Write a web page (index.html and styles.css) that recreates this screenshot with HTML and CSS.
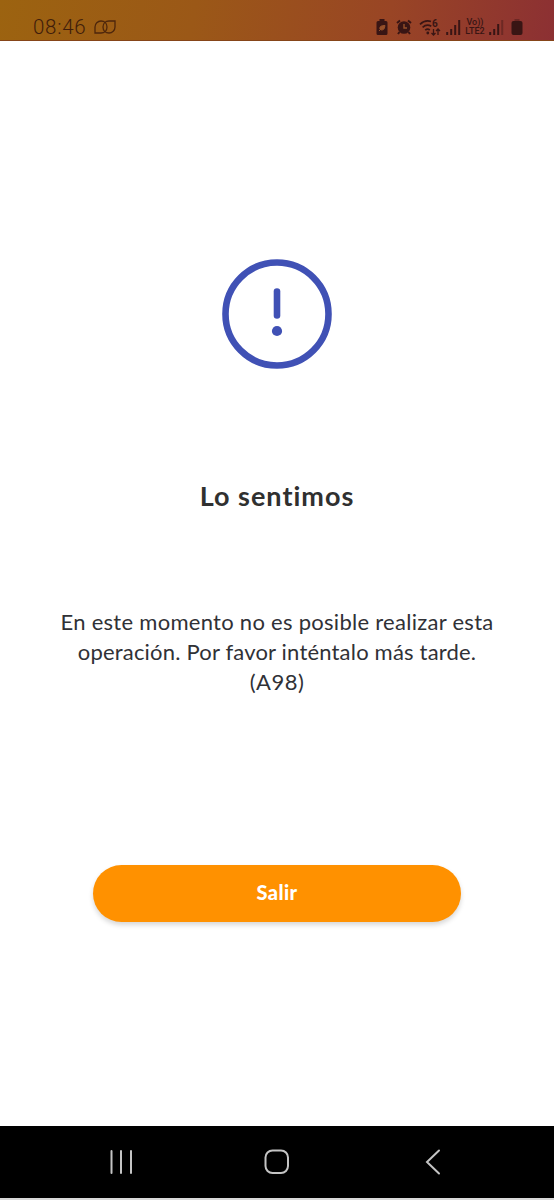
FILE: index.html
```
<!DOCTYPE html>
<html lang="es">
<head>
  <meta charset="UTF-8" />
  <meta name="viewport" content="width=device-width, initial-scale=1.0" />
  <title>Lo sentimos</title>
  <link rel="stylesheet" href="styles.css">
</head>
<body>
  <header class="status-bar">
    <span class="time">08:46</span>
    <svg class="rings" width="22" height="14" viewBox="0 0 22 14">
      <path d="M1 13V7a6 6 0 0 1 6-6c3.500 0 6 2.500 6 6s-2.500 6-6 6z" />
      <path d="M21 1v6a6 6 0 0 1-6 6c-3.500 0-6-2.500-6-6s2.500-6 6-6z" />
    </svg>

    <div class="status-icons">
      <svg class="saver" width="12" height="16" viewBox="0 0 12 16">
        <path class="fill" d="M3.500 0h5v2h1.500q1.500 0 1.500 1.500v11q0 1.500-1.500 1.500h-8Q.5 16 .5 14.500v-11Q.5 2 2 2h1.500z" />
        <path class="cut" d="M9 6.500c-3.500 0-5.200.8-5.200 2.800 0 2.400 4 2.200 4.600-.3zM3 12l2-2" />
      </svg>
      <svg class="alarm" width="16" height="16" viewBox="0 0 16 16">
        <circle class="fill" cx="8" cy="8.500" r="6.300" />
        <path class="line" d="M1 4l3-2.500M15 4l-3-2.500M3.500 13L2 15M12.500 13l1.500 2" />
        <path class="hands" d="M8 5v4h3" />
      </svg>
      <svg class="wifi" width="22" height="19" viewBox="0 0 22 19">
        <path class="line arcs" d="M1 6.300C4.500 3 8.500 2.400 12 3.500M3.600 9.300c2.600-2.300 6-2.500 8.700-1M6.200 12.200c1.400-1.200 3.300-1.200 4.600-.2" />
        <circle class="fill" cx="8.800" cy="15" r="1.400" />
        <path class="line thin" d="M14.500 11v6m-2-2l2 2 2-2M19 17v-6m-2 2l2-2 2 2" />
        <text x="13" y="9">6</text>
      </svg>
      <svg class="signal" width="15" height="15" viewBox="0 0 15 15">
        <path class="line" d="M1.200 12v3M5.200 9v6M9.200 5v10M13.200 0v15" />
      </svg>
      <div class="volte"><span>Vo))</span><span>LTE2</span></div>
      <svg class="signal" width="15" height="15" viewBox="0 0 15 15">
        <path class="line" d="M1.200 12v3M5.200 9v6M9.200 4v11" />
        <path class="line faded" d="M13.200 0v15" />
      </svg>
      <svg class="battery" width="12" height="16" viewBox="0 0 12 16">
        <path class="fill faded" d="M3.500 0h5v2h-5z" />
        <rect class="fill" x=".5" y="2" width="11" height="14" rx="2" />
      </svg>
    </div>
  </header>

  <main class="content">
    <svg class="alert" width="110" height="110" viewBox="0 0 110 110">
      <circle class="ring" cx="55" cy="55" r="51.500" />
      <path class="mark" d="M55 32.500v24" />
      <circle class="dot" cx="55" cy="72" r="5.100" />
    </svg>
    <h1>Lo sentimos</h1>
    <p class="message">
      <span class="line-1">En este momento no es posible realizar esta</span>
      <span class="line-2">operación. Por favor inténtalo más tarde.</span>
      <span class="line-3">(A98)</span>
    </p>
    <button type="button" class="btn">Salir</button>
  </main>

  <nav class="nav-bar">
    <svg width="24" height="26" viewBox="0 0 24 26">
      <path d="M2.500 2v22M12 2v22M22 2v22" />
    </svg>
    <svg class="home" width="26" height="26" viewBox="0 0 26 26">
      <rect x="1.500" y="1.500" width="22.500" height="22.500" rx="7" />
    </svg>
    <svg width="16" height="26" viewBox="0 0 16 26">
      <path d="M14 1.500L2 13l12 11.500" />
    </svg>
  </nav>
</body>
</html>
```

FILE: styles.css
```
* {
  box-sizing: border-box;
}
body {
  margin: 0;
  height: 1200px;
  display: flex;
  flex-direction: column;
  background-color: #fff;
  font-family: Lato, "Open Sans", sans-serif;
  overflow: hidden;
}
svg {
  display: block;
  flex: none;
}
.status-bar {
  height: 41px;
  padding: 14px 31px 0 33px;
  display: flex;
  align-items: center;
  background: linear-gradient(100deg, #9c6310 0%, #9b5817 35%, #994525 70%, #8c3033 100%);
  border-bottom: 1px solid #864519;
}
.time {
  width: 55px;
  font-family: Roboto, sans-serif;
  font-size: 20.5px;
  font-weight: 300;
  line-height: 24px;
  letter-spacing: 0.7px;
  color: #401d0b;
}
.rings {
  margin-left: 6px;
  fill: none;
  stroke: #4d260c;
  stroke-width: 1.3;
}
.status-icons {
  display: flex;
  align-items: center;
  margin-left: auto;
}
.fill {
  fill: #391514;
}
.line {
  fill: none;
  stroke: #391514;
  stroke-width: 2;
}
.arcs {
  stroke-width: 1.7;
}
.thin {
  stroke-width: 1.3;
}
.faded {
  opacity: 0.4;
}
.cut {
  fill: #96502a;
  stroke: #96502a;
}
.hands {
  fill: none;
  stroke: #96502a;
  stroke-width: 1.4;
}
.alarm {
  margin-left: 8px;
}
.wifi {
  margin-left: 7px;
}
.wifi text {
  font: bold 10px Roboto, sans-serif;
  fill: #391514;
}
.signal {
  margin-left: 5px;
}
.volte {
  width: 22px;
  margin-left: 3px;
  display: flex;
  flex-direction: column;
  align-items: center;
  font: 500 9px/9px Roboto, sans-serif;
  color: #391514;
}
.volte + .signal {
  margin-left: 3px;
}
.battery {
  margin-left: 7px;
}
.content {
  flex: 1;
  display: flex;
  flex-direction: column;
  align-items: center;
  padding-top: 218px;
}
.ring {
  fill: none;
  stroke: #4051b5;
  stroke-width: 6.6;
}
.mark {
  stroke: #4051b5;
  stroke-width: 6.6;
  stroke-linecap: round;
}
.dot {
  fill: #4051b5;
}
h1 {
  margin: 109px 0 0;
  font-size: 27px;
  line-height: 36px;
  letter-spacing: 1px;
  color: #303030;
}
.message {
  margin: 93px 0 0;
  font-size: 22px;
  line-height: 30px;
  text-align: center;
  color: #303136;
}
.message span {
  display: block;
  white-space: nowrap;
}
.line-1 {
  letter-spacing: 0.28px;
}
.line-2 {
  letter-spacing: 0.19px;
}
.line-3 {
  letter-spacing: 0.5px;
}
.btn {
  width: 368px;
  height: 57px;
  margin-top: 168px;
  padding: 0 0 3px;
  border: none;
  border-radius: 29px;
  background-color: #ff9100;
  box-shadow: 0 3px 5px rgba(0, 0, 0, 0.16);
  font-family: inherit;
  font-size: 20px;
  font-weight: 900;
  letter-spacing: 0.4px;
  color: #fff;
}
.nav-bar {
  height: 74px;
  padding: 0 113px 0 109px;
  display: flex;
  align-items: center;
  justify-content: space-between;
  background-color: #000;
  border-bottom: 2px solid #d8d8d8;
}
.nav-bar svg {
  fill: none;
  stroke: #c4c4c4;
  stroke-width: 2;
  stroke-linecap: round;
}
.nav-bar .home {
  margin-right: 4px;
}
```
